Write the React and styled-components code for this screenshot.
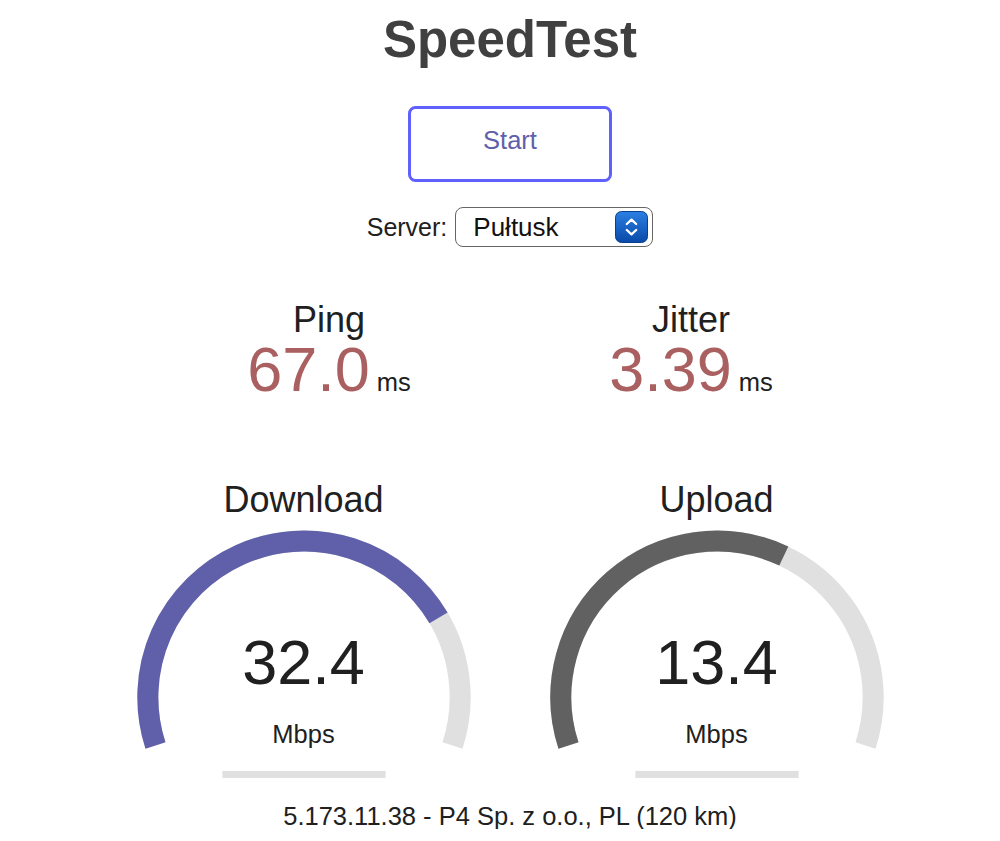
import React from "react";
import styled, { createGlobalStyle } from "styled-components";

const GlobalStyle = createGlobalStyle`
  html, body { margin: 0; padding: 0; background: #ffffff; }
  body {
    font-family: "Liberation Sans", Arial, Helvetica, sans-serif;
    color: #202020;
  }
`;

const Page = styled.div`
  padding-left: 20px;
  text-align: center;
`;

const Title = styled.h1`
  margin: 15px 0 0;
  font-size: 51px;
  line-height: 50px;
  font-weight: bold;
  color: #404040;
`;

const StartButton = styled.button`
  margin: 41px auto 0;
  width: 204px;
  height: 76px;
  box-sizing: border-box;
  border: 3px solid #6060ff;
  border-radius: 7.5px;
  background: transparent;
  color: #6060aa;
  font-family: "Liberation Sans", Arial, Helvetica, sans-serif;
  font-size: 25.5px;
  line-height: 62px;
  padding: 0;
  display: flex;
  justify-content: center;
  align-items: flex-start;
  cursor: pointer;
`;

const ServerRow = styled.div`
  margin-top: 25px;
  display: flex;
  justify-content: center;
  align-items: center;
  gap: 8px;
`;

const ServerLabel = styled.span`
  font-size: 25px;
  line-height: 40px;
`;

const SelectBox = styled.div`
  box-sizing: border-box;
  width: 198px;
  height: 40px;
  border: 1.5px solid #666;
  border-radius: 8px;
  display: flex;
  align-items: center;
  padding: 0 4px 0 17px;
  background: #fff;
`;

const SelectText = styled.span`
  font-size: 26px;
  line-height: 30px;
  color: #111;
`;

const Stepper = styled.svg`
  margin-left: auto;
  display: block;
`;

const PingRow = styled.div`
  margin-top: 55px;
  display: flex;
  justify-content: center;
  gap: 5px;
`;

const PingArea = styled.div`
  width: 357px;
  display: flex;
  flex-direction: column;
  align-items: center;
`;

const TestName = styled.div`
  font-size: 36px;
  line-height: ${(p) => p.$lh}px;
`;

const ValueLine = styled.div`
  margin-top: 1px;
  height: 60px;
  display: flex;
  justify-content: center;
  align-items: baseline;
`;

const BigValue = styled.span`
  font-size: 63px;
  line-height: 60px;
  color: ${(p) => p.$color};
`;

const Unit = styled.span`
  font-size: 25.5px;
  line-height: 30px;
  margin-left: 7px;
`;

const GaugeRow = styled.div`
  margin-top: 81px;
  display: flex;
  justify-content: center;
  gap: 5px;
`;

const GaugeArea = styled.div`
  position: relative;
  width: 408px;
  height: 319px;
  display: flex;
  flex-direction: column;
  align-items: center;
`;

const GaugeSvg = styled.svg`
  position: absolute;
  left: 0;
  top: 0;
  z-index: 0;
`;

const GaugeText = styled.div`
  position: relative;
  z-index: 1;
  display: flex;
  flex-direction: column;
  align-items: center;
`;

const GaugeNumber = styled.div`
  margin-top: 110px;
  font-size: 63px;
  line-height: 64px;
`;

const GaugeUnit = styled.div`
  margin-top: 25px;
  font-size: 25.5px;
  line-height: 30px;
`;

const IpLine = styled.div`
  margin-top: 4px;
  font-size: 25.5px;
  line-height: 26px;
`;

const W = 408;
const H = 319;
const S = H * 0.0055;
const LW = 12 * S;
const R = H / 1.8 - LW;
const CX = W / 2;
const CY = H - 58 * S;

const arcPath = (from, to) => {
  const x0 = CX + R * Math.cos(from);
  const y0 = CY + R * Math.sin(from);
  const x1 = CX + R * Math.cos(to);
  const y1 = CY + R * Math.sin(to);
  const large = to - from > Math.PI ? 1 : 0;
  return `M${x0.toFixed(2)} ${y0.toFixed(2)} A${R.toFixed(2)} ${R.toFixed(2)} 0 ${large} 1 ${x1.toFixed(2)} ${y1.toFixed(2)}`;
};

const mbpsToAmount = (s) => 1 - 1 / Math.pow(1.3, Math.sqrt(s));

function Gauge({ name, value, color }) {
  const start = -Math.PI * 1.1;
  const end = Math.PI * 0.1;
  const amt = mbpsToAmount(parseFloat(value));
  const fgEnd = start + amt * Math.PI * 1.2;
  return (
    <GaugeArea>
      <GaugeSvg width={W} height={H} viewBox={`0 0 ${W} ${H}`}>
        <path d={arcPath(start, end)} stroke="#E0E0E0" strokeWidth={LW} fill="none" />
        <path d={arcPath(start, fgEnd)} stroke={color} strokeWidth={LW} fill="none" />
        <rect x={W * 0.3} y={H - 16 * S} width={W * 0.4} height={4 * S} fill="#E0E0E0" />
      </GaugeSvg>
      <GaugeText>
        <TestName $lh={40}>{name}</TestName>
        <GaugeNumber>{value}</GaugeNumber>
        <GaugeUnit>Mbps</GaugeUnit>
      </GaugeText>
    </GaugeArea>
  );
}

function PingBox({ name, value }) {
  return (
    <PingArea>
      <TestName $lh={36}>{name}</TestName>
      <ValueLine>
        <BigValue $color="#AA6060">{value}</BigValue>
        <Unit>ms</Unit>
      </ValueLine>
    </PingArea>
  );
}

export default function App() {
  return (
    <>
      <GlobalStyle />
      <Page>
        <Title>SpeedTest</Title>
        <StartButton>Start</StartButton>
        <ServerRow>
          <ServerLabel>Server:</ServerLabel>
          <SelectBox>
            <SelectText>Pułtusk</SelectText>
            <Stepper width="33" height="32" viewBox="0 0 33 32">
              <defs>
                <linearGradient id="stepGrad" x1="0" y1="0" x2="0" y2="1">
                  <stop offset="0" stopColor="#2b7fe3" />
                  <stop offset="1" stopColor="#0a4aa8" />
                </linearGradient>
              </defs>
              <rect x="0.5" y="0.5" width="32" height="31" rx="6" fill="url(#stepGrad)" stroke="#0a3f8f" strokeWidth="1" />
              <path d="M11.8 13 L16.5 8.6 L21.2 13" stroke="#fff" strokeWidth="2.3" fill="none" strokeLinecap="round" strokeLinejoin="round" />
              <path d="M11.8 19 L16.5 23.4 L21.2 19" stroke="#fff" strokeWidth="2.3" fill="none" strokeLinecap="round" strokeLinejoin="round" />
            </Stepper>
          </SelectBox>
        </ServerRow>
        <PingRow>
          <PingBox name="Ping" value="67.0" />
          <PingBox name="Jitter" value="3.39" />
        </PingRow>
        <GaugeRow>
          <Gauge name="Download" value="32.4" color="#6060AA" />
          <Gauge name="Upload" value="13.4" color="#616161" />
        </GaugeRow>
        <IpLine>5.173.11.38 - P4 Sp. z o.o., PL (120 km)</IpLine>
      </Page>
    </>
  );
}
